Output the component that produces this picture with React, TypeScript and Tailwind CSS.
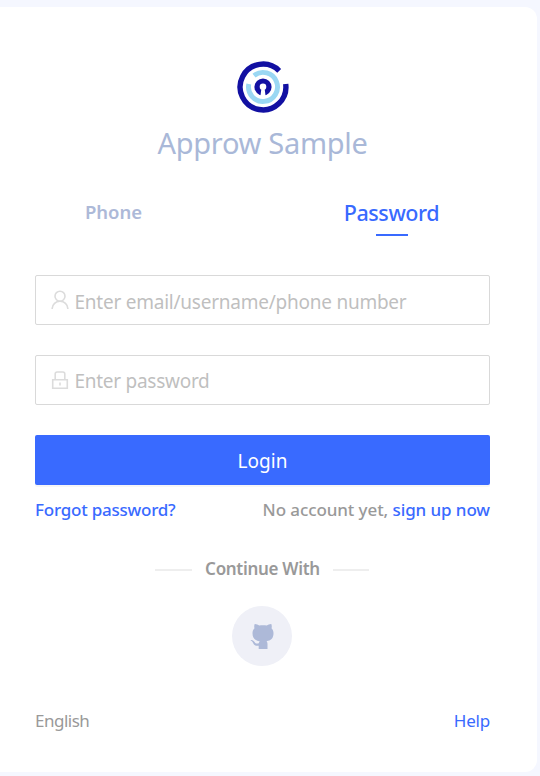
import React from "react";

function Logo() {
  return (
    <svg width="52" height="52" viewBox="-26 -26 52 52" fill="none">
      <path d="M16.200 -16.200A22.900 22.900 0 1 0 22.700 -3" stroke="#1210a2" strokeWidth="5.400" />
      <path d="M-9 -11.400A14.500 14.500 0 1 1 -14.200 -3" stroke="#9ad7f3" strokeWidth="4.900" />
      <circle r="8.600" fill="#1210a2" />
      <circle r="3.300" fill="#fff" cy="-0.300" />
      <path d="M-1.500 1h3L2.600 9h-5.200z" fill="#fff" />
    </svg>
  );
}

function UserIcon() {
  return (
    <svg width="18" height="20" viewBox="0 0 18 20" fill="none" stroke="#dcdcdc" strokeWidth="1.600">
      <circle cx="9" cy="6.200" r="5" />
      <path d="M1.200 19v-.6C1.400 14.300 4.600 11.300 9 11.300s7.600 3 7.800 7.100v.6" />
    </svg>
  );
}

function LockIcon() {
  return (
    <svg width="18" height="20" viewBox="0 0 18 20" fill="none" stroke="#dcdcdc" strokeWidth="1.600">
      <path d="M1.700 9.700h14.600v8.600H1.700zM4.200 9.700V4a2 2 0 0 1 2-2h5.600a2 2 0 0 1 2 2v5.700M9 12.500v3" />
    </svg>
  );
}

function GithubCat() {
  return (
    <svg width="26" height="26" viewBox="0 0 26 26" fill="#adb9d8" className="ml-[2px]">
      <path d="M4.700 1.100C6.300 1 8 1.800 9.200 2.600c2.500-.5 5.100-.5 7.600 0 1.200-.8 2.900-1.600 4.500-1.500.6 1.500.6 2.900.2 4.200 1.300 1.400 2 3 2 5 0 5.200-2.700 7.300-7 7.900.8.800 1 1.700 1 3V26H8.700v-3.300c-3.300.5-4.700-.6-5.600-2.600C2.600 19 1.900 18.300.8 17.600c-.4-.4 0-.8.7-.7 1.300.1 2.300 1 3 2.100 1 1.500 2.300 1.800 4.300 1.200.1-.8.400-1.500.9-2-4.400-.6-7.200-2.700-7.200-7.900 0-2 .7-3.600 2-5-.4-1.300-.4-2.700.2-4.200z" />
    </svg>
  );
}

function Field({ icon, placeholder, className }: { icon: React.ReactNode; placeholder: string; className: string }) {
  return (
    <label className="flex h-[50px] items-center rounded-[2px] border border-[#d9d9d9] pl-[15px]">
      {icon}
      <input
        placeholder={placeholder}
        className={"ml-[5.500px] h-full min-w-0 flex-1 bg-transparent text-[19px] outline-none placeholder:text-[#bfbfbf] " + className}
      />
    </label>
  );
}

export default function App() {
  return (
    <div className="h-[776px] w-[540px] bg-[#f5f7ff] pt-[7px] font-['Noto_Sans','Open_Sans',sans-serif]">
      <main className="flex h-[765px] w-[537px] flex-col rounded-r-[12px] bg-white pr-[47px] pl-[35px]">
        <header className="flex flex-col items-center pt-[54px]">
          <Logo />
          <h1 className="mt-[10px] text-[29px] leading-[40px] tracking-[-0.3px] whitespace-nowrap text-[#a9b8d8]">Approw Sample</h1>
        </header>
        <nav className="mt-[25px] flex h-[50px]">
          <button className="h-[48px] w-[157px] text-[18.500px] font-semibold text-[#adb9d8]">Phone</button>
          <button className="ml-auto flex w-[197px] flex-col items-center text-[21.500px] leading-[49px] font-medium text-[#396aff]">
            <span className="tracking-[-0.400px]">Password</span>
            <span className="-mt-[3px] h-[2px] w-[32px] bg-[#396aff]" />
          </button>
        </nav>
        <form className="mt-[37px] flex flex-col gap-[30px]">
          <Field icon={<UserIcon />} placeholder="Enter email/username/phone number" className="pt-[4px] tracking-[-0.240px]" />
          <Field icon={<LockIcon />} placeholder="Enter password" className="pt-[2px] tracking-[-0.270px]" />
          <button type="button" className="h-[50px] rounded-[2px] bg-[#396aff] pt-[2px] text-[19px] text-white shadow-[0_2px_0_rgba(0,0,0,0.035)]">Login</button>
        </form>
        <div className="mt-[13px] flex justify-between text-[17px] leading-[24px] font-medium whitespace-nowrap text-[#999]">
          <a className="tracking-[-0.230px] text-[#396aff]">Forgot password?</a>
          <p className="tracking-[-0.090px]">No account yet, <a className="text-[#396aff]">sign up now</a></p>
        </div>
        <div className="mt-[35px] flex h-[24px] items-center gap-[12px] pl-[120px] text-[17px] font-semibold text-[#999]">
          <span className="mt-[2px] h-[2px] w-[37px] bg-[#eee]" />
          <span className="w-[117px] text-center tracking-[-0.300px] whitespace-nowrap">Continue With</span>
          <span className="mt-[2px] h-[2px] w-[36px] bg-[#eee]" />
        </div>
        <button className="mt-[25px] ml-[197px] flex h-[60px] w-[60px] items-center justify-center rounded-full bg-[#eff0f7]">
          <GithubCat />
        </button>
        <footer className="mt-[43px] flex justify-between text-[17px] leading-[24px]">
          <span className="tracking-[-0.500px] text-[#999]">English</span>
          <a className="tracking-[-0.200px] text-[#396aff]">Help</a>
        </footer>
      </main>
    </div>
  );
}
